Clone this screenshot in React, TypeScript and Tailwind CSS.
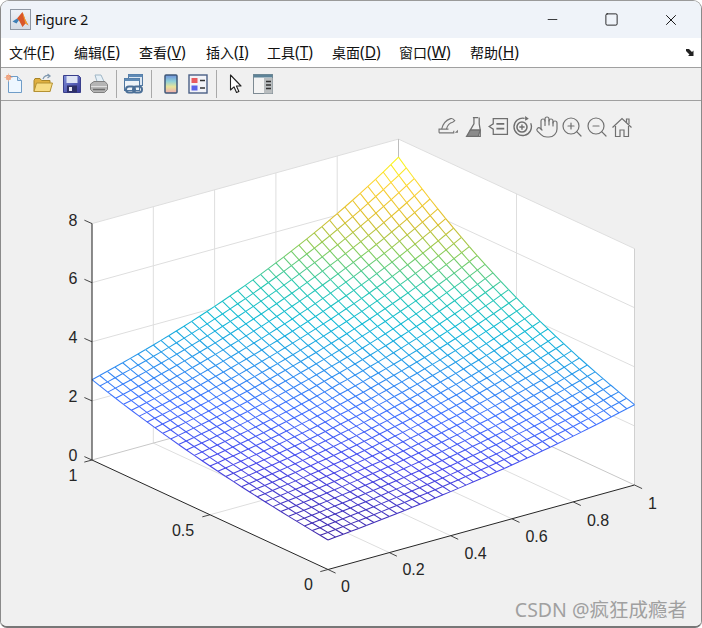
import React from "react";
import { Hand, ZoomIn, ZoomOut, Minus, Square, X } from "lucide-react";

const O = [328, 569.5];
const VX = [306.5, -84.5];
const VY = [-236, -109.5];
const ZU = 29.55;
const P = (x: number, y: number, z: number): [number, number] => [
  O[0] + x * VX[0] + y * VY[0],
  O[1] + x * VX[1] + y * VY[1] - z * ZU,
];
const stops = [
  [62, 38, 168],
  [71, 71, 235],
  [62, 111, 255],
  [39, 151, 235],
  [12, 184, 214],
  [40, 200, 175],
  [129, 204, 89],
  [220, 189, 41],
  [252, 207, 48],
  [249, 251, 21],
];
const parula = (t: number) => {
  const v = Math.max(0, Math.min(0.9999, t)) * 9;
  const i = Math.floor(v);
  const f = v - i;
  const c = stops[i].map((a, k) => Math.round(a + (stops[i + 1][k] - a) * f));
  return `rgb(${c[0]},${c[1]},${c[2]})`;
};
const NX = 40;
const NY = 30;
const f = (x: number, y: number) => Math.exp(x + y);
const col = (z: number) => parula((z - 1) / (Math.exp(2) - 1));

function Seg({ a, b }: { a: [number, number]; b: [number, number] }) {
  const za = f(a[0], a[1]);
  const zb = f(b[0], b[1]);
  const p = P(a[0], a[1], za);
  const q = P(b[0], b[1], zb);
  return <line x1={p[0]} y1={p[1]} x2={q[0]} y2={q[1]} stroke={col((za + zb) / 2)} strokeWidth={1.05} />;
}

function Mesh() {
  const out: React.ReactNode[] = [];
  const rim: [number, number][] = [];
  for (let i = 0; i <= NX; i++) rim.push(P(i / NX, 0, f(i / NX, 0)));
  for (let j = 0; j <= NY; j++) rim.push(P(1, j / NY, f(1, j / NY)));
  for (let i = NX; i >= 0; i--) rim.push(P(i / NX, 1, f(i / NX, 1)));
  for (let j = NY; j >= 0; j--) rim.push(P(0, j / NY, f(0, j / NY)));
  for (let i = 0; i <= NX; i++)
    for (let j = 0; j < NY; j++) out.push(<Seg key={`a${i}-${j}`} a={[i / NX, j / NY]} b={[i / NX, (j + 1) / NY]} />);
  for (let j = 0; j <= NY; j++)
    for (let i = 0; i < NX; i++) out.push(<Seg key={`b${i}-${j}`} a={[i / NX, j / NY]} b={[(i + 1) / NX, j / NY]} />);
  return (
    <g>
      <polygon points={rim.map((p) => p.join(",")).join(" ")} fill="#fff" />
      {out}
    </g>
  );
}

const L = ({ a, b, c, w = 1 }: { a: [number, number]; b: [number, number]; c: string; w?: number }) => (
  <line x1={a[0]} y1={a[1]} x2={b[0]} y2={b[1]} stroke={c} strokeWidth={w} />
);

function Plot() {
  const grid = "#dedede";
  const Z = 8;
  const poly = (pts: [number, number][]) => pts.map((p) => p.join(",")).join(" ");
  const labels: [string, number, number][] = [
    ["8", 73, 220], ["6", 73, 278.5], ["4", 73, 337], ["2", 73, 396], ["0", 73, 455.5],
    ["1", 73, 475], ["0.5", 183, 530], ["0", 308.5, 584],
    ["0", 345.5, 586], ["0.2", 413.5, 569], ["0.4", 475.5, 553], ["0.6", 536.5, 536], ["0.8", 598, 520], ["1", 652.5, 503],
  ];
  const xt = [0.2, 0.4, 0.6, 0.8];
  const zt = [2, 4, 6];
  return (
    <svg className="block" width={700} height={525} viewBox="1 101 700 525">
      <polygon points={poly([P(0, 1, 0), P(1, 1, 0), P(1, 1, Z), P(0, 1, Z)])} fill="#fff" />
      <polygon points={poly([P(1, 1, 0), P(1, 0, 0), P(1, 0, Z), P(1, 1, Z)])} fill="#fff" />
      <polygon points={poly([P(0, 0, 0), P(1, 0, 0), P(1, 1, 0), P(0, 1, 0)])} fill="#fff" />
      {xt.map((x) => (
        <g key={x}>
          <L a={P(x, 1, 0)} b={P(x, 1, Z)} c={grid} />
          <L a={P(x, 0, 0)} b={P(x, 1, 0)} c={grid} />
        </g>
      ))}
      <L a={P(1, 0.5, 0)} b={P(1, 0.5, Z)} c={grid} />
      <L a={P(0, 0.5, 0)} b={P(1, 0.5, 0)} c={grid} />
      {zt.map((z) => (
        <g key={z}>
          <L a={P(0, 1, z)} b={P(1, 1, z)} c={grid} />
          <L a={P(1, 1, z)} b={P(1, 0, z)} c={grid} />
        </g>
      ))}
      <L a={P(0, 1, Z)} b={P(1, 1, Z)} c={grid} />
      <L a={P(1, 1, Z)} b={P(1, 0, Z)} c={grid} />
      <L a={P(1, 0, 0)} b={P(1, 0, Z)} c="#d0d0d0" />
      <L a={P(1, 1, 0)} b={P(1, 1, Z)} c="#bdbdbd" />
      <L a={P(1, 1, 0)} b={P(0, 1, 0)} c="#c8c8c8" />
      <L a={P(1, 1, 0)} b={P(1, 0, 0)} c="#c8c8c8" />
      <Mesh />
      <L a={P(0, 1, 0)} b={P(0, 1, Z)} c="#1c1c1c" />
      <L a={P(0, 0, 0)} b={P(0, 1, 0)} c="#262626" />
      <L a={P(0, 0, 0)} b={P(1, 0, 0)} c="#262626" />
      {[0, 0.2, 0.4, 0.6, 0.8, 1].map((x) => {
        const p = P(x, 0, 0);
        return <L key={x} a={p} b={[p[0] + 7.6, p[1] + 3.6]} c="#333" w={0.9} />;
      })}
      {[0, 0.5, 1].map((y) => {
        const p = P(0, y, 0);
        return <L key={y} a={p} b={[p[0] - 7.7, p[1] + 2.1]} c="#333" w={0.9} />;
      })}
      {[0, 2, 4, 6, 8].map((z) => {
        const p = P(0, 1, z);
        return <L key={z} a={p} b={[p[0] - 7.6, p[1] - 3.4]} c="#333" w={0.9} />;
      })}
      {labels.map(([t, x, y], i) => (
        <text key={i} x={x} y={y + 5.7} textAnchor="middle" fontSize={16} fill="#262626" fontFamily='"Liberation Sans", sans-serif'>
          {t}
        </text>
      ))}
    </svg>
  );
}

const Logo = () => (
  <svg width={21} height={21} viewBox="0 0 21 21">
    <defs>
      <linearGradient id="tile" x1="0" y1="0" x2="0" y2="1">
        <stop offset="0" stopColor="#eef2f8" />
        <stop offset="1" stopColor="#d5dbe4" />
      </linearGradient>
    </defs>
    <rect x="0.5" y="0.5" width="20" height="20" fill="url(#tile)" stroke="#8f97a3" />
    <path d="M2.500 12.500 7 9.500 9 11 6.500 14.500z" fill="#3f7fb5" />
    <path d="M7 9.500 12.500 3l3 8 3 5.500-3-2-3 3.500-3.500-6.500z" fill="#d9572a" />
    <path d="M12.500 3 15.500 11 18.500 16.500 15.500 14.500 13.500 8z" fill="#f0a030" />
  </svg>
);

const NewDoc = () => (
  <svg width={22} height={22} viewBox="0 0 22 22">
    <path d="M4.500 3.500h9l4 4v12h-13z" fill="#eef7ff" stroke="#6f9dc8" />
    <path d="M13.500 3.500v4h4" fill="#cfe2f5" stroke="#6f9dc8" />
    <circle cx="4.500" cy="4.500" r="2.400" fill="#e8784a" />
    <path d="M4.500 0.500v8M0.500 4.500h8M2 2l5 5M7 2 2 7" stroke="#f2b390" strokeWidth="0.8" />
  </svg>
);
const Open = () => (
  <svg width={22} height={22} viewBox="0 0 22 22">
    <path d="M2 7.500 3 5.500h5l1.500 2h8.500v11H2z" fill="#e0b040" stroke="#a78428" />
    <path d="M2 18.500 4.500 10h16l-2.500 8.500z" fill="#f7dc84" stroke="#b59232" />
    <path d="M11 6c1-3 4-4 6-3.500M15.500 1 18 3l-2.500 2" fill="none" stroke="#8099b0" strokeWidth="1.3" />
  </svg>
);
const Save = () => (
  <svg width={20} height={20} viewBox="0 0 20 20">
    <defs>
      <linearGradient id="fl" x1="0" y1="0" x2="1" y2="1">
        <stop offset="0" stopColor="#7f8fd8" />
        <stop offset="1" stopColor="#38399a" />
      </linearGradient>
    </defs>
    <path d="M1.500 1.500h15l2 2v15h-17z" fill="url(#fl)" stroke="#3a3f8c" />
    <rect x="4.500" y="2" width="11" height="7" fill="#dfe5f5" />
    <rect x="5" y="11.500" width="10" height="7" fill="#2d2f66" />
    <rect x="7" y="13" width="3" height="4" fill="#e9e9f2" />
  </svg>
);
const Printer = () => (
  <svg width={20} height={20} viewBox="0 0 20 20">
    <path d="M6 1h6l3 6.500H8z" fill="#e6f0f7" stroke="#9fb6c6" />
    <path d="M1.500 10 5 7.500h11l2.500 3v5l-3 3h-11l-3-3z" fill="#b5b5b5" stroke="#808080" />
    <path d="M2 12.500h16" stroke="#e0e0e0" />
    <path d="M4 15.500h12" stroke="#6d6d6d" strokeWidth="1.5" />
  </svg>
);
const LinkIc = () => (
  <svg width={22} height={22} viewBox="0 0 22 22">
    <rect x="5.500" y="1.500" width="14" height="11" fill="#dbe6f2" stroke="#5279a3" />
    <rect x="5.500" y="1.500" width="14" height="2.500" fill="#5f8ab5" />
    <rect x="1.500" y="5.500" width="15" height="12" fill="#eef3f8" stroke="#4f769f" />
    <rect x="1.500" y="5.500" width="15" height="2.500" fill="#5f8ab5" />
    <rect x="3" y="13.500" width="9" height="6" rx="3" fill="none" stroke="#4b6f97" strokeWidth="2" />
    <rect x="10" y="13.500" width="9" height="6" rx="3" fill="none" stroke="#4b6f97" strokeWidth="2" />
  </svg>
);
const Colorbar = () => (
  <svg width={14} height={20} viewBox="0 0 14 20">
    <defs>
      <linearGradient id="cb" x1="0" y1="0" x2="0" y2="1">
        <stop offset="0" stopColor="#6f90dc" />
        <stop offset="0.35" stopColor="#8fd0d8" />
        <stop offset="0.65" stopColor="#e8e49a" />
        <stop offset="1" stopColor="#eeaab0" />
      </linearGradient>
    </defs>
    <rect x="1" y="1" width="12" height="18" rx="1" fill="url(#cb)" stroke="#3f5878" strokeWidth="1.5" />
  </svg>
);
const Legend = () => (
  <svg width={20} height={20} viewBox="0 0 20 20">
    <rect x="1" y="1" width="18" height="18" fill="#f2f3f8" stroke="#4a5f85" strokeWidth="1.4" />
    <rect x="3.500" y="4" width="6" height="5" fill="#e85a5f" />
    <rect x="3.500" y="11.500" width="6" height="5" fill="#5a62e8" />
    <path d="M12 6.500h5M12 14h5" stroke="#333" strokeWidth="1.4" />
  </svg>
);
const Cursor = () => (
  <svg width={14} height={20} viewBox="0 0 14 20">
    <path d="M1.500 1v15l3.500-3.200 2.500 5.700 2.400-1-2.500-5.500H12z" fill="#fff" stroke="#222" strokeWidth="1.1" strokeLinejoin="round" />
  </svg>
);
const PanelIc = () => (
  <svg width={20} height={20} viewBox="0 0 20 20">
    <rect x="0.500" y="0.500" width="19" height="19" fill="#f3f3f3" stroke="#7d8a93" />
    <rect x="0.500" y="0.500" width="19" height="3" fill="#5d8398" />
    <rect x="11" y="4" width="8.500" height="15.500" fill="#b9bdbf" />
    <path d="M13 7.500h5M13 11h5M13 14.500h5" stroke="#333" strokeWidth="1.4" />
  </svg>
);
const Sep = ({ cls }: { cls: string }) => <div className={`h-[28px] w-px bg-[#a9a9a9] ${cls}`} />;

const Brush = () => (
  <svg width={20} height={22} viewBox="0 0 19 20" fill="none" stroke="#6f6f6f" strokeWidth="1.2">
    <path d="M7.500 1h5M8.500 1v6L5 13h9.500l-1-6V1" />
    <path d="M5 13 1.500 19h11l2-6z" fill="#8b8b8b" />
    <path d="M14.500 13v6h-2" />
  </svg>
);
const EditIc = () => (
  <svg width={21} height={21} viewBox="0 0 20 20" fill="none" stroke="#777" strokeWidth="1.1">
    <path d="M1 16v-3.500h9M1 16h14v-2" />
    <path d="M3.500 12.500C4.500 8 7.500 4 12 2.500c1.500-.5 3 .5 4 2l-2 1.500c-3 .5-5 3-6 6.500" />
    <path d="M16 16l3-3v3z" fill="#777" stroke="none" />
  </svg>
);
const DataTip = () => (
  <svg width={21} height={21} viewBox="0 0 20 20" fill="none" stroke="#6f6f6f" strokeWidth="1.2">
    <path d="M5 2.500h13.500v15H5v-5L1 10l4-2.500z" />
    <path d="M8 7.500h7.500M8 12h7.500" strokeWidth="1.5" />
  </svg>
);
const Rotate = () => (
  <svg width={21} height={21} viewBox="0 0 20 20" fill="none" stroke="#6f6f6f" strokeWidth="1.3">
    <path d="M12 2.200A8.300 8.300 0 1 0 17.800 7" />
    <path d="M12.500 0 16 2.500 12.500 4.500z" fill="#6f6f6f" stroke="none" />
    <circle cx="9.500" cy="10.500" r="4.800" strokeWidth="1.500" />
    <path d="M9.500 8v5M7 10.500h5" strokeWidth="1.300" />
  </svg>
);
const HomeIc = () => (
  <svg width={22} height={22} viewBox="0 0 22 22" fill="none" stroke="#707070" strokeWidth="1.2">
    <path d="M1.500 11.500 11 2.500l9.500 9" />
    <path d="M15.500 2.500v4M15.500 3h2.500v5" />
    <path d="M4.500 10v10.500h4.500V14h4v6.500h4.500V10" />
  </svg>
);

const Cell = ({ children }: { children: React.ReactNode }) => (
  <div className="flex h-[25px] w-[25px] items-center justify-center">{children}</div>
);

type Item = { zh: string; k: string; w: string };
const menus: Item[] = [
  { zh: "文件", k: "F", w: "w-[65px]" },
  { zh: "编辑", k: "E", w: "w-[65px]" },
  { zh: "查看", k: "V", w: "w-[67px]" },
  { zh: "插入", k: "I", w: "w-[61px]" },
  { zh: "工具", k: "T", w: "w-[65px]" },
  { zh: "桌面", k: "D", w: "w-[67px]" },
  { zh: "窗口", k: "W", w: "w-[71px]" },
  { zh: "帮助", k: "H", w: "w-[70px]" },
];

export default function App() {
  return (
    <div className="h-[628px] w-[702px] overflow-hidden bg-white">
      <div className="flex h-[628px] w-[702px] flex-col overflow-hidden rounded-t-[9px] rounded-b-[7px] border-x border-t border-b-2 border-x-[#8a8a8a] border-t-[#9a9a9a] border-b-[#777] font-['Noto_Sans','Noto_Sans_CJK_SC',sans-serif]">
        <div className="flex h-[37px] shrink-0 items-center bg-[#eff3f9] pl-[9px]">
          <Logo />
          <span className="ml-[4px] text-[14px] text-[#111]">Figure 2</span>
          <div className="ml-auto flex items-center">
            <Minus size={15} strokeWidth={1.2} className="text-black" />
            <div className="ml-[44px]"><Square size={15} strokeWidth={1.3} className="text-black" /></div>
            <div className="ml-[43px] mr-[21px]"><X size={18} strokeWidth={1.2} className="text-black" /></div>
          </div>
        </div>
        <div className="flex h-[30px] shrink-0 items-center border-b border-[#a0a0a0] bg-white pl-[8px] text-[14px] text-[#111]">
          {menus.map((m) => (
            <div key={m.k} className={`${m.w} whitespace-nowrap`}>
              {m.zh}
              <span className="text-[15.5px]">
                (<span className="underline">{m.k}</span>)
              </span>
            </div>
          ))}
          <svg className="ml-auto mr-[6px]" width={9} height={8} viewBox="0 0 9 8">
            <path d="M0 0h3l3 3 1.500-1.500V7H2l1.500-1.500-3.500-3.500z" fill="#222" />
          </svg>
        </div>
        <div className="flex h-[33px] shrink-0 items-center border-b border-[#a0a0a0] bg-[#f0f0f0] pl-[3px]">
          <NewDoc />
          <div className="ml-[6px]"><Open /></div>
          <div className="ml-[8px]"><Save /></div>
          <div className="ml-[7px]"><Printer /></div>
          <Sep cls="ml-[7px]" />
          <div className="ml-[6px]"><LinkIc /></div>
          <Sep cls="ml-[6px]" />
          <div className="ml-[12px]"><Colorbar /></div>
          <div className="ml-[10px]"><Legend /></div>
          <Sep cls="ml-[8px]" />
          <div className="ml-[12px]"><Cursor /></div>
          <div className="ml-[10px]"><PanelIc /></div>
        </div>
        <div className="relative flex-1 bg-[#f0f0f0]">
          <Plot />
          <div className="absolute left-[435px] top-[13px] flex items-center text-[#707070]">
            <Cell><EditIc /></Cell>
            <div className="ml-px"><Cell><Brush /></Cell></div>
            <div className="-ml-px"><Cell><DataTip /></Cell></div>
            <div className="-ml-px"><Cell><Rotate /></Cell></div>
            <div className="-ml-px"><Cell><Hand size={24} strokeWidth={1.2} /></Cell></div>
            <Cell><ZoomIn size={24} strokeWidth={1.2} /></Cell>
            <Cell><ZoomOut size={24} strokeWidth={1.2} /></Cell>
            <Cell><HomeIc /></Cell>
          </div>
          <div className="absolute right-[14px] bottom-[3px] whitespace-nowrap text-[19.5px] leading-[26px] text-[#a0a0a0]">
            CSDN @疯狂成瘾者
          </div>
        </div>
      </div>
    </div>
  );
}
